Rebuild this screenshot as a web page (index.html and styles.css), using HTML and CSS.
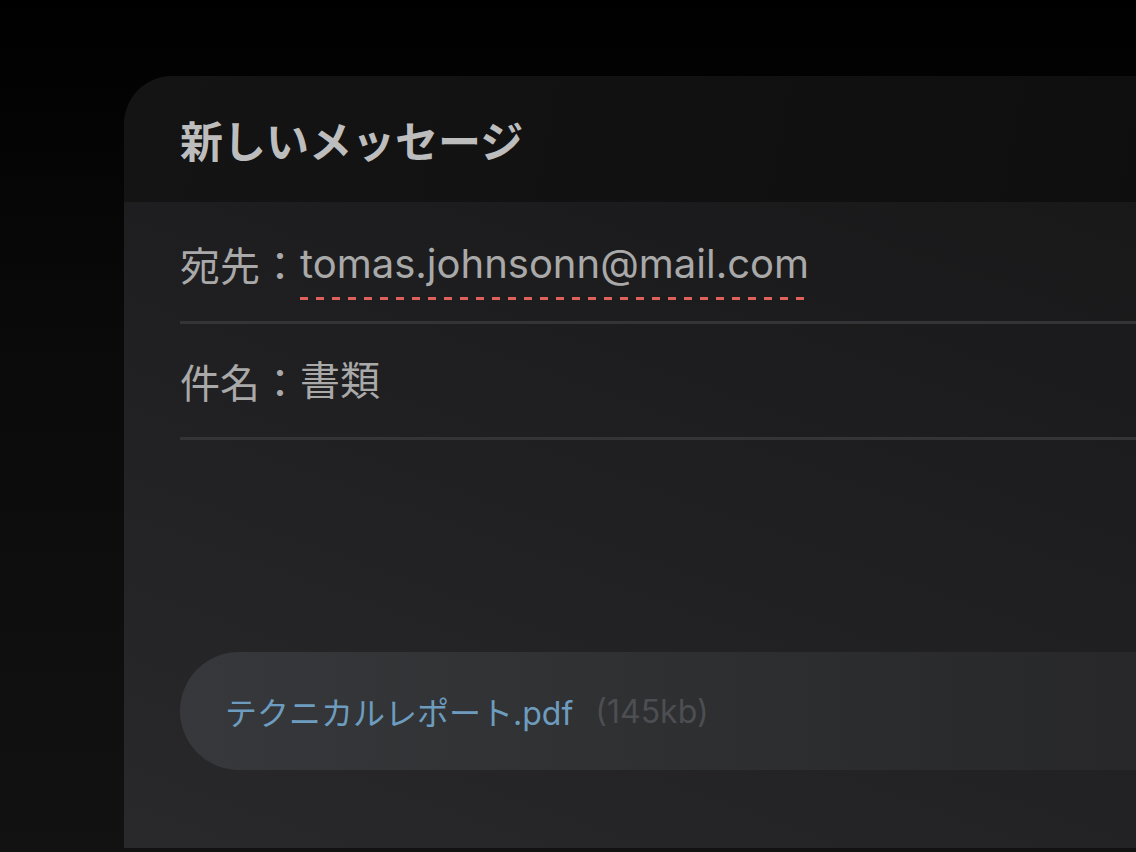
FILE: index.html
```html
<!DOCTYPE html>
<html lang="ja">
<head>
<meta charset="utf-8">
<link rel="stylesheet" href="styles.css">
</head>
<body>
<div class="stage">
  <div class="card">
    <header class="card-head">
      <h1 class="title">新しいメッセージ</h1>
    </header>
    <section class="card-body">
      <div class="row row-to">
        <span class="label">宛先：</span><span class="value email">tomas.johnsonn@mail.com</span>
      </div>
      <div class="row row-subject">
        <span class="label">件名：</span><span class="value">書類</span>
      </div>
      <div class="spacer"></div>
      <div class="attachment">
        <span class="file">テクニカルレポート.pdf</span>
        <span class="size">(145kb)</span>
      </div>
    </section>
  </div>
</div>
</body>
</html>
```

FILE: styles.css
```css
html, body {
  margin: 0;
  height: 100%;
  overflow: hidden;
}
body {
  background: linear-gradient(180deg, #000 0%, #0a0a0a 40%, #121212 100%);
  font-family: Inter, "Noto Sans CJK JP", sans-serif;
}
.stage {
  padding: 76px 0 0 124px;
  height: 852px;
  box-sizing: border-box;
}
.card {
  width: 1100px;
  height: 772px;
  border-radius: 48px 0 0 0;
  overflow: hidden;
  display: flex;
  flex-direction: column;
}
.card-head {
  height: 126px;
  flex: none;
  background: linear-gradient(100deg, #141414 0%, #0e0e0e 100%);
  padding-left: 56px;
  display: flex;
  align-items: center;
  box-sizing: border-box;
}
.title {
  margin: 0;
  font-family: "Noto Sans CJK JP", sans-serif;
  font-weight: 700;
  font-size: 43px;
  color: #bdbdbd;
  line-height: 1;
}
.card-body {
  flex: 1;
  background: linear-gradient(200deg, #181819 0%, #1f1f21 45%, #29292b 100%);
  padding-left: 56px;
  display: flex;
  flex-direction: column;
}
.row {
  box-sizing: border-box;
  border-bottom: 3px solid #343436;
  display: flex;
  align-items: center;
  font-size: 40px;
  line-height: 1;
  color: #a9a9a9;
}
.row-to {
  height: 122px;
  padding-top: 4px;
}
.row-subject {
  height: 116px;
}
.label {
  font-family: "Noto Sans CJK JP", sans-serif;
}
.value {
  font-family: Inter, "Noto Sans CJK JP", sans-serif;
}
.email {
  padding-bottom: 16px;
  margin-bottom: -16px;
  background-image: linear-gradient(90deg, #e0605a 0 8px, transparent 8px 16px);
  background-size: 16px 3px;
  background-repeat: repeat-x;
  background-position: 0 100%;
}
.spacer {
  height: 212px;
  flex: none;
}
.attachment {
  height: 118px;
  flex: none;
  border-radius: 59px 0 0 59px;
  background: linear-gradient(90deg, #36383b 0%, #2e2f31 50%, #262628 100%);
  display: flex;
  align-items: center;
  padding-left: 45px;
  gap: 22px;
  font-size: 32px;
}
.file {
  color: #6d9cbf;
}
.size {
  color: #4c4e52;
}
```
